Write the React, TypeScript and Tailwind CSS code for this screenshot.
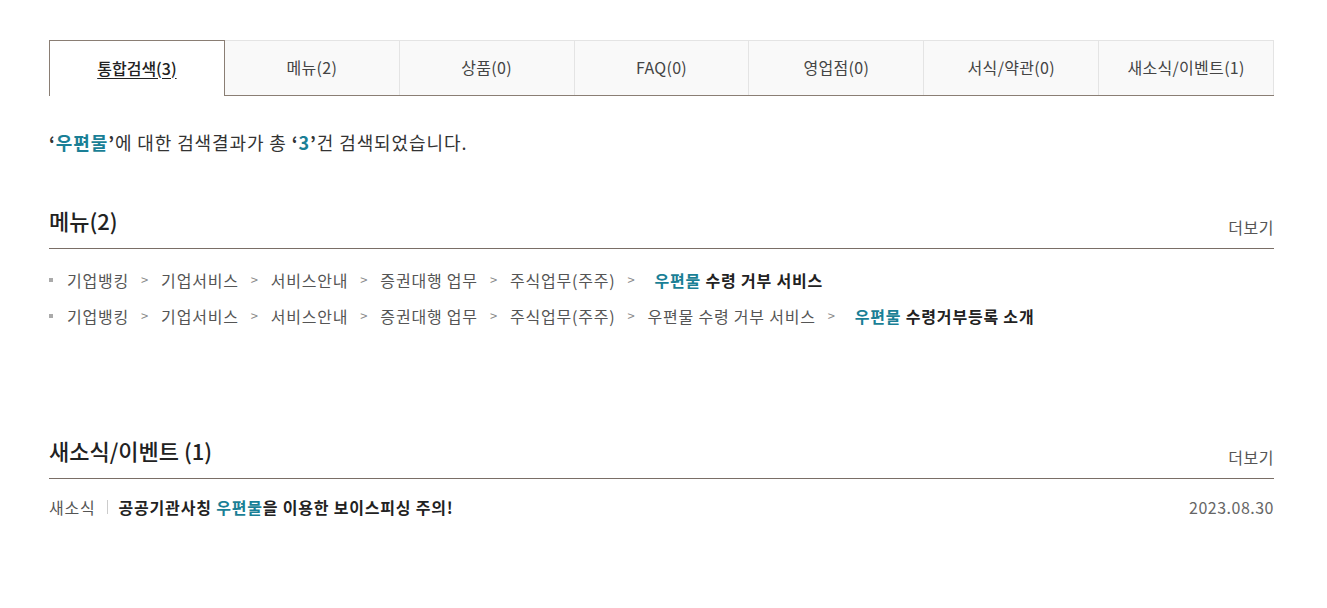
import React from 'react';

const tabs = ['통합검색(3)', '메뉴(2)', '상품(0)', 'FAQ(0)', '영업점(0)', '서식/약관(0)', '새소식/이벤트(1)'];

const Kw = ({ children }: { children: React.ReactNode }) => (
  <span className="text-[#1a7f96]">{children}</span>
);

const Sep = () => <span className="mx-[12px] text-[13px] text-[#888]">&gt;</span>;

const Crumbs = ({ items, last }: { items: string[]; last: React.ReactNode }) => (
  <li className="flex items-center h-[36px]">
    <span className="w-[4px] h-[4px] bg-[#aaa] mr-[14px]" />
    {items.map((it) => (
      <React.Fragment key={it}>
        <span className="text-[#555]">{it}</span>
        <Sep />
      </React.Fragment>
    ))}
    <span className="ml-[7px] font-bold text-[#222]">{last}</span>
  </li>
);

const SectionHead = ({ title }: { title: string }) => (
  <div className="flex items-end justify-between border-b border-[#7a6e66] pb-[11px] h-[44px]">
    <h2 className="text-[22px] font-medium text-[#222] leading-[30px] mb-[2px]">{title}</h2>
    <a className="text-[16px] leading-[20px] text-[#555] tracking-[0.5px]">더보기</a>
  </div>
);

export default function App() {
  return (
    <div
      className="w-[1327px] h-[608px] bg-white pt-[40px] px-[49px]"
      style={{ fontFamily: '"Noto Sans CJK KR", "Noto Sans", sans-serif' }}
    >
      <div className="w-[1225px]">
        <ul className="flex h-[56px] border-b border-[#8a7e74]">
          {tabs.map((t, i) => (
            <li
              key={t}
              className={
                i === 0
                  ? 'flex-1 flex items-center justify-center pb-[2px] bg-white border-t border-l border-r border-[#8a7e74] text-[16px] text-[#222] font-medium -mb-px'
                  : 'flex-1 flex items-center justify-center pb-[2px] bg-[#f9f9f9] border-t border-r border-[#e4e4e4] text-[16px] text-[#444]'
              }
            >
              <span className={i === 0 ? 'underline underline-offset-[3px]' : 'tracking-[0.3px]'}>{t}</span>
            </li>
          ))}
        </ul>

        <p className="mt-[33px] text-[18px] leading-[27px] text-[#333] tracking-[0.9px]">
          <span className="font-bold">‘<Kw>우편물</Kw>’</span>에 대한 검색결과가 총{' '}
          <span className="font-bold">‘<Kw>3</Kw>’</span>건 검색되었습니다.
        </p>

        <section className="mt-[49px]">
          <SectionHead title="메뉴(2)" />
          <ul className="mt-[13px] text-[16px] tracking-[0.8px]">
            <Crumbs
              items={['기업뱅킹', '기업서비스', '서비스안내', '증권대행 업무', '주식업무(주주)']}
              last={
                <>
                  <Kw>우편물</Kw> 수령 거부 서비스
                </>
              }
            />
            <Crumbs
              items={['기업뱅킹', '기업서비스', '서비스안내', '증권대행 업무', '주식업무(주주)', '우편물 수령 거부 서비스']}
              last={
                <>
                  <Kw>우편물</Kw> 수령거부등록 소개
                </>
              }
            />
          </ul>
        </section>

        <section className="mt-[101px]">
          <SectionHead title="새소식/이벤트 (1)" />
          <div className="flex items-center justify-between mt-[16px] h-[24px] text-[16px] tracking-[0.8px]">
            <div className="flex items-center">
              <span className="text-[#555]">새소식</span>
              <span className="mx-[11px] w-px h-[14px] bg-[#ccc]" />
              <span className="font-bold text-[#222]">
                공공기관사칭 <Kw>우편물</Kw>을 이용한 보이스피싱 주의!
              </span>
            </div>
            <span className="text-[16px] text-[#666] tracking-[0.5px]">2023.08.30</span>
          </div>
        </section>
      </div>
    </div>
  );
}
